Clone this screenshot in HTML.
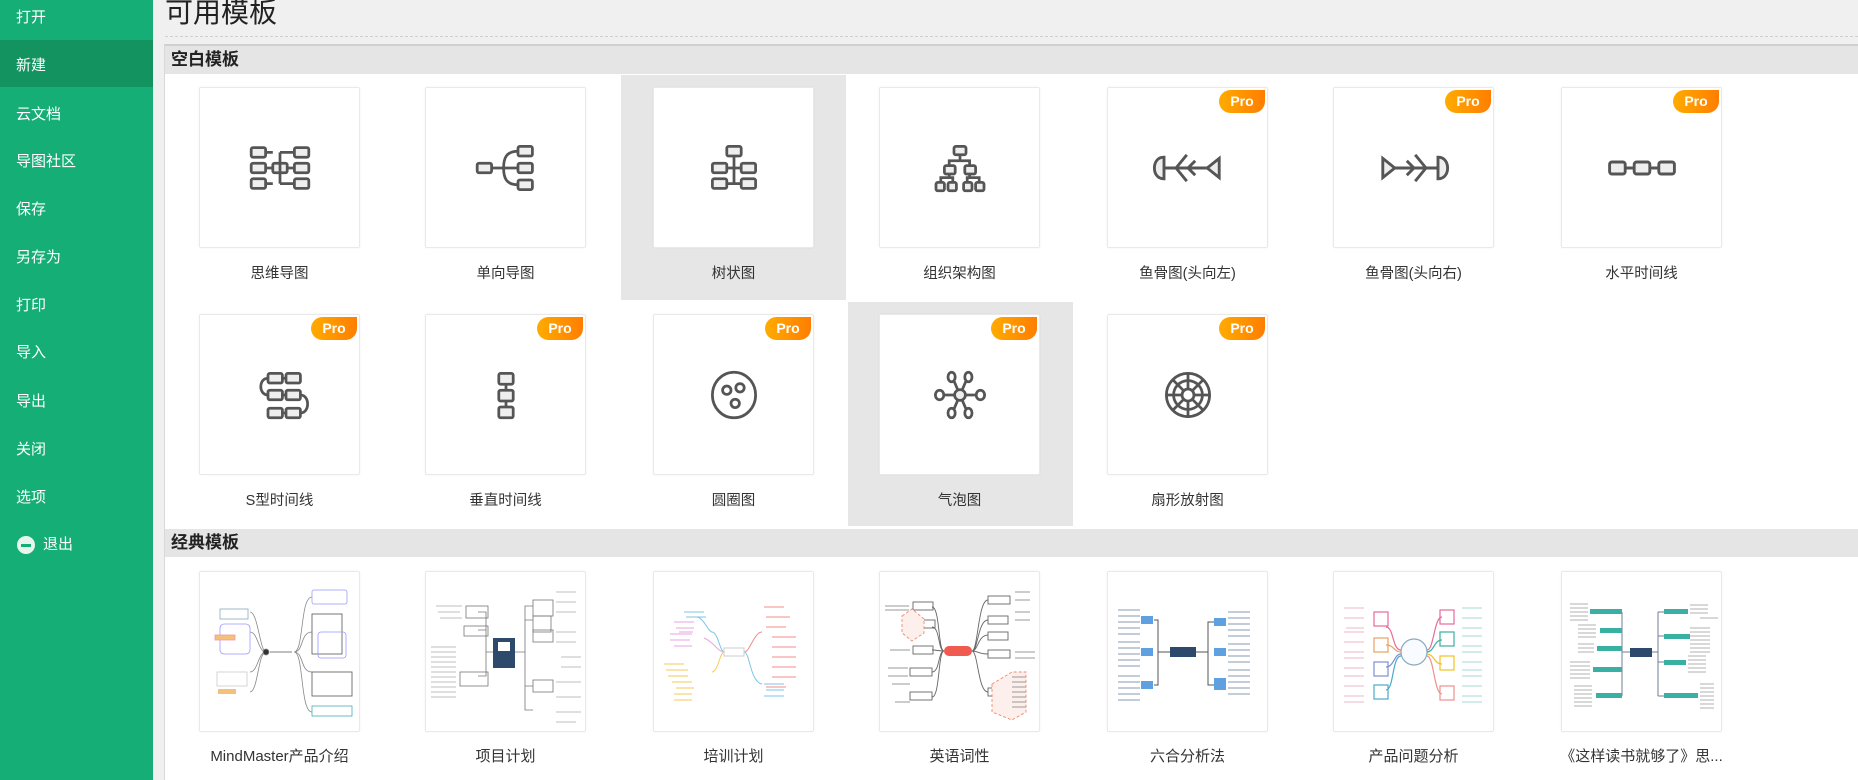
<!DOCTYPE html>
<html><head><meta charset="utf-8"><style>
*{margin:0;padding:0;box-sizing:border-box}
body{width:1858px;height:780px;overflow:hidden;background:#f0f0f0;font-family:"Liberation Sans","Noto Sans CJK SC",sans-serif;position:relative}
#side{position:absolute;left:0;top:0;width:153px;height:780px;background:#15ae76}
.si{position:absolute;left:16px;color:#fff;font-size:15px;line-height:20px}
#act{position:absolute;left:0;top:40px;width:153px;height:47px;background:#12935f}
#title{position:absolute;left:165px;top:-5px;font-size:28px;color:#222;line-height:36px}
#dash{position:absolute;left:165px;right:0;top:36px;border-top:1px dashed #cfcfcf}
#panel{position:absolute;left:164px;top:44px;right:0;bottom:0;background:#fff;border-left:1px solid #d8d8d8;border-top:2px solid #d0d0d0}
.hd{position:absolute;left:165px;right:0;height:28px;background:#e5e5e5;font-weight:bold;font-size:17px;color:#222;padding-left:6px;line-height:28px}
.hl{position:absolute;width:225px;background:#e6e6e6}
.card{position:absolute;width:161px;height:161px;background:#fff;border:1px solid #e9e9e9;border-radius:2px;box-shadow:0 0 2px rgba(0,0,0,.05)}
.card svg.ic{position:absolute;left:44px;top:44px}
.pro{position:absolute;right:2px;top:2px;width:46px;height:23px;background:linear-gradient(90deg,#ffab00,#ff7e00);border-radius:12px 0 12px 12px;color:#fff;font-weight:bold;font-size:14px;line-height:23px;text-align:center}
.lb{position:absolute;width:225px;text-align:center;font-size:14.5px;color:#333}
.th{position:absolute;left:0;top:0}
</style></head><body>
<div id="side">
<div id="act"></div>
<div class="si" style="top:8px">打开</div>
<div class="si" style="top:56px">新建</div>
<div class="si" style="top:105px">云文档</div>
<div class="si" style="top:152px">导图社区</div>
<div class="si" style="top:200px">保存</div>
<div class="si" style="top:248px">另存为</div>
<div class="si" style="top:296px">打印</div>
<div class="si" style="top:343px">导入</div>
<div class="si" style="top:392px">导出</div>
<div class="si" style="top:440px">关闭</div>
<div class="si" style="top:488px">选项</div>
<div style="position:absolute;left:17px;top:536px;width:18px;height:18px;border-radius:50%;background:#e8f5ef"><div style="position:absolute;left:4px;top:8px;width:10px;height:2.5px;background:#15ae76"></div></div>
<div class="si" style="top:535px;left:43px">退出</div>
</div>
<div id="title">可用模板</div>
<div id="dash"></div>
<div id="panel"></div>
<div class="hd" style="top:46px">空白模板</div>
<div class="hd" style="top:529px">经典模板</div>
<div class="hl" style="left:621px;top:75px;height:225px"></div>
<div class="hl" style="left:848px;top:302px;height:224px"></div>

<svg width="0" height="0" style="position:absolute">
<defs>
<g id="b"><rect width="12" height="8" rx="1.5" fill="#eee" stroke="#555" stroke-width="2.3"/></g>
</defs></svg>

<!-- Row 1 -->
<div class="card" style="left:199px;top:87px"><svg class="ic" width="72" height="72" viewBox="0 0 60 60" fill="none" stroke="#555" stroke-width="2.3">
<use href="#b" x="6" y="13"/><use href="#b" x="6" y="26"/><use href="#b" x="6" y="39"/>
<use href="#b" x="42" y="13"/><use href="#b" x="42" y="26"/><use href="#b" x="42" y="39"/>
<use href="#b" x="24" y="26"/><path d="M24 17H18M24 43H18M30 17v26M30 17h12M30 43h12M36 30h6M18 30h6"/></svg></div>
<div class="card" style="left:425px;top:87px"><svg class="ic" width="72" height="72" viewBox="0 0 60 60" fill="none" stroke="#555" stroke-width="2.3">
<use href="#b" x="6" y="26"/><use href="#b" x="40" y="12"/><use href="#b" x="40" y="26"/><use href="#b" x="40" y="40"/>
<path d="M18 30h22M40 16c-10 0-12 6-12 14s2 14 12 14"/></svg></div>
<div class="card" style="left:653px;top:87px"><svg class="ic" width="72" height="72" viewBox="0 0 60 60" fill="none" stroke="#555" stroke-width="2.3">
<use href="#b" x="24" y="12"/><use href="#b" x="12" y="26"/><use href="#b" x="36" y="26"/><use href="#b" x="12" y="39"/><use href="#b" x="36" y="39"/>
<path d="M30 20v24M24 30h12M24 43h12"/></svg></div>
<div class="card" style="left:879px;top:87px"><svg class="ic" width="72" height="72" viewBox="0 0 60 60" fill="none" stroke="#555" stroke-width="2.3">
<rect x="25" y="12" width="10" height="7" rx="1.5" fill="#eee"/><rect x="17" y="28" width="9" height="7" rx="1.5" fill="#eee"/><rect x="34" y="28" width="9" height="7" rx="1.5" fill="#eee"/>
<rect x="10" y="42" width="7" height="7" rx="1.5" fill="#eee"/><rect x="20" y="42" width="7" height="7" rx="1.5" fill="#eee"/><rect x="33" y="42" width="7" height="7" rx="1.5" fill="#eee"/><rect x="43" y="42" width="7" height="7" rx="1.5" fill="#eee"/>
<path d="M30 19v5M21 28v-4h17v4M21 35v3h-7v4M21 38h3v4M38 35v3h-2v4M38 38h8v4"/></svg></div>
<div class="card" style="left:1107px;top:87px"><div class="pro">Pro</div><svg class="ic" width="72" height="72" viewBox="0 0 60 60" fill="none" stroke="#555" stroke-width="2.4">
<path d="M10 21c-6 0-8 5-8 9s2 9 8 9z" fill="#eee"/><path d="M10 30h36M20 30l9-11M20 30l9 11M30 30l6-6M30 30l6 6"/><path d="M56 22l-10 8 10 8z" fill="#eee"/></svg></div>
<div class="card" style="left:1333px;top:87px"><div class="pro">Pro</div><svg class="ic" width="72" height="72" viewBox="0 0 60 60" fill="none" stroke="#555" stroke-width="2.4">
<path d="M50 21c6 0 8 5 8 9s-2 9-8 9z" fill="#eee"/><path d="M14 30h36M40 30l-9-11M40 30l-9 11M30 30l-6-6M30 30l-6 6"/><path d="M4 22l10 8-10 8z" fill="#eee"/></svg></div>
<div class="card" style="left:1561px;top:87px"><div class="pro">Pro</div><svg class="ic" width="72" height="72" viewBox="0 0 60 60" fill="none" stroke="#555" stroke-width="2.4">
<rect x="3" y="25" width="13" height="10" rx="2" fill="#eee"/><rect x="23.5" y="25" width="13" height="10" rx="2" fill="#eee"/><rect x="44" y="25" width="13" height="10" rx="2" fill="#eee"/><path d="M16 30h7.5M36.5 30h7.5"/></svg></div>
<div class="lb" style="left:167px;top:262px">思维导图</div>
<div class="lb" style="left:393px;top:262px">单向导图</div>
<div class="lb" style="left:621px;top:262px">树状图</div>
<div class="lb" style="left:847px;top:262px">组织架构图</div>
<div class="lb" style="left:1075px;top:262px">鱼骨图(头向左)</div>
<div class="lb" style="left:1301px;top:262px">鱼骨图(头向右)</div>
<div class="lb" style="left:1529px;top:262px">水平时间线</div>

<!-- Row 2 -->
<div class="card" style="left:199px;top:314px"><div class="pro">Pro</div><svg class="ic" width="72" height="72" viewBox="0 0 60 60" fill="none" stroke="#555" stroke-width="2.3">
<use href="#b" x="20" y="12"/><use href="#b" x="35" y="12"/><use href="#b" x="20" y="26"/><use href="#b" x="35" y="26"/><use href="#b" x="20" y="41"/><use href="#b" x="35" y="41"/>
<path d="M32 16h3M32 30h3M32 45h3M20 16c-8 0-8 14 0 14M47 30c8 0 8 15 0 15"/></svg></div>
<div class="card" style="left:425px;top:314px"><div class="pro">Pro</div><svg class="ic" width="72" height="72" viewBox="0 0 60 60" fill="none" stroke="#555" stroke-width="2.3">
<rect x="24" y="12" width="12" height="9" rx="1.5" fill="#eee"/><rect x="24" y="26" width="12" height="9" rx="1.5" fill="#eee"/><rect x="24" y="40" width="12" height="9" rx="1.5" fill="#eee"/><path d="M30 21v5M30 35v5"/></svg></div>
<div class="card" style="left:653px;top:314px"><div class="pro">Pro</div><svg class="ic" width="72" height="72" viewBox="0 0 60 60" fill="none" stroke="#555" stroke-width="2.3">
<ellipse cx="30" cy="30" rx="18" ry="19"/><circle cx="24" cy="26" r="3.5"/><circle cx="35" cy="24" r="3.5"/><circle cx="31" cy="37" r="3.5"/></svg></div>
<div class="card" style="left:879px;top:314px"><div class="pro">Pro</div><svg class="ic" width="72" height="72" viewBox="0 0 60 60" fill="none" stroke="#555" stroke-width="2.3">
<path d="M30 30L24 16M30 30L36 16M30 30L24 44M30 30L36 44M30 30H14M30 30H46"/>
<circle cx="30" cy="30" r="4.5" fill="#eee"/><ellipse cx="23" cy="15" rx="3" ry="4" fill="#fff"/><ellipse cx="37" cy="15" rx="3" ry="4" fill="#fff"/><ellipse cx="23" cy="45" rx="3" ry="4" fill="#fff"/><ellipse cx="37" cy="45" rx="3" ry="4" fill="#fff"/><ellipse cx="13" cy="30" rx="3.5" ry="4" fill="#fff"/><ellipse cx="47" cy="30" rx="3.5" ry="4" fill="#fff"/></svg></div>
<div class="card" style="left:1107px;top:314px"><div class="pro">Pro</div><svg class="ic" width="72" height="72" viewBox="0 0 60 60" fill="none" stroke="#555" stroke-width="2.3">
<circle cx="30" cy="30" r="18"/><circle cx="30" cy="30" r="12"/><circle cx="30" cy="30" r="5"/><path d="M30 12v13M30 35v13M12 30h13M35 30h13M17 17l9 9M34 34l9 9M43 17l-9 9M26 34l-9 9"/></svg></div>
<div class="lb" style="left:167px;top:489px">S型时间线</div>
<div class="lb" style="left:393px;top:489px">垂直时间线</div>
<div class="lb" style="left:621px;top:489px">圆圈图</div>
<div class="lb" style="left:847px;top:489px">气泡图</div>
<div class="lb" style="left:1075px;top:489px">扇形放射图</div>

<!-- Row 3 thumbnails -->
<div class="card" style="left:199px;top:571px"><svg class="th" width="160" height="160" fill="none" stroke="#888" stroke-width="0.8">
<path d="M66 80C60 80 58 40 50 40M66 80C58 80 58 60 50 60M66 80C58 80 58 100 50 100M66 80C58 80 58 120 50 120M94 80C104 80 100 25 112 25M94 80C104 80 100 60 112 60M94 80C104 80 100 100 112 100M94 80C104 80 100 140 112 140"/>
<rect x="20" y="37" width="28" height="10" stroke="#8ab"/><rect x="20" y="52" width="30" height="30" rx="4" stroke="#99f"/><rect x="15" y="63" width="20" height="5" fill="#f5c17a" stroke="#e9a"/><rect x="17" y="100" width="30" height="14" stroke="#ccc"/><rect x="18" y="117" width="18" height="5" fill="#f5c17a" stroke="none"/>
<rect x="112" y="18" width="35" height="14" rx="2" stroke="#99f"/><rect x="112" y="42" width="30" height="40" stroke="#555"/><rect x="118" y="60" width="28" height="26" rx="3" stroke="#99f"/><rect x="112" y="100" width="40" height="24" stroke="#555"/><rect x="112" y="134" width="40" height="10" stroke="#4ab"/>
<circle cx="66" cy="80" r="3" fill="#333"/><path d="M70 80h22" stroke="#555"/></svg></div>

<div class="card" style="left:425px;top:571px"><svg class="th" width="160" height="160" fill="none" stroke="#777" stroke-width="0.8">
<rect x="67" y="66" width="22" height="30" fill="#2d4a6c" stroke="none"/><rect x="72" y="70" width="12" height="9" fill="#fff" stroke="none"/>
<path d="M67 80H60V40h-8M60 40v0M60 80V58h-8M60 80v24h-8M89 80h10V34h8M99 80v-32h8M99 80v34h8M99 80v58h8"/>
<rect x="40" y="34" width="22" height="12"/><rect x="38" y="54" width="24" height="10"/><rect x="34" y="100" width="28" height="14"/>
<rect x="107" y="28" width="20" height="16"/><rect x="107" y="44" width="18" height="16"/><rect x="107" y="58" width="20" height="12"/><rect x="107" y="108" width="20" height="12"/>
<path d="M10 34h26M12 40h22M14 46h22M5 75h25M5 80h25M5 85h25M5 90h25M5 95h25M5 100h25M5 105h25M5 110h25M5 115h25M5 120h25M5 125h25M130 20h20M130 30h20M130 40h20M130 60h20M130 70h20M135 85h20M135 95h20M130 110h25M130 125h25M130 140h25M130 150h20" stroke="#aaa"/></svg></div>

<div class="card" style="left:653px;top:571px"><svg class="th" width="160" height="160" fill="none" stroke-width="1">
<path d="M70 80C66 80 64 60 58 60C54 60 50 45 42 45" stroke="#7cc6e8"/><path d="M70 80C64 80 60 70 50 66" stroke="#e8a6df"/><path d="M70 80C66 80 64 100 58 100" stroke="#f7c95a"/><path d="M90 80C96 80 100 60 108 60" stroke="#f38b8b"/><path d="M90 80C96 80 96 110 108 112" stroke="#7cc6e8"/>
<path d="M20 50h20M22 56h18M16 62h22M16 68h20M20 74h18M25 60h14" stroke="#e8a6df"/><path d="M10 92h20M12 98h22M14 104h20M18 110h20M22 116h18M20 122h18M20 128h18" stroke="#f7c95a"/><path d="M110 35h20M112 45h24M112 55h20M118 65h24M118 75h24M118 85h24M118 95h24M118 105h24M112 115h20" stroke="#f38b8b"/><path d="M110 112h20M112 118h18M110 124h20M30 40h20M32 45h20" stroke="#7cc6e8"/>
<rect x="70" y="76" width="20" height="8" stroke="#ccc"/></svg></div>

<div class="card" style="left:879px;top:571px"><svg class="th" width="160" height="160" fill="none" stroke="#666" stroke-width="0.9">
<rect x="64" y="74" width="28" height="10" rx="5" fill="#f05a50" stroke="none"/>
<path d="M64 79C58 79 60 35 52 35M64 79C58 79 60 55 52 55M64 79C58 79 58 78 52 78M64 79C58 79 60 100 52 100M64 79C58 79 60 125 52 125M92 79C98 79 98 28 108 28M92 79C98 79 98 48 108 48M92 79C98 79 98 63 108 63M92 79C98 79 98 82 108 82M92 79C98 79 98 120 108 120"/>
<rect x="33" y="30" width="20" height="8"/><rect x="33" y="48" width="22" height="8"/><rect x="33" y="74" width="20" height="8"/><rect x="30" y="96" width="22" height="8"/><rect x="30" y="120" width="22" height="8"/>
<rect x="108" y="24" width="22" height="8"/><rect x="108" y="44" width="20" height="8"/><rect x="108" y="60" width="20" height="8"/><rect x="108" y="78" width="22" height="8"/><rect x="108" y="116" width="22" height="8"/>
<path d="M22 44l10-7 12 10v14l-12 8-10-8z" stroke="#f08a70" stroke-dasharray="3 2" fill="#fdf0ec"/><path d="M112 112l20-12h14v40l-14 8-20-8z" stroke="#f08a70" stroke-dasharray="3 2" fill="#fdf0ec"/>
<path d="M5 34h24M5 38h24M10 78h20M8 96h20M8 104h20M12 112h18M15 130h15M135 20h15M135 28h15M135 40h15M135 48h15M135 80h20M135 86h20M132 105h14M132 110h14M132 115h14M132 120h14M132 125h14M132 130h14M132 135h14" stroke="#999"/></svg></div>

<div class="card" style="left:1107px;top:571px"><svg class="th" width="160" height="160" fill="none" stroke="#5b8ec8" stroke-width="1">
<rect x="62" y="75" width="26" height="10" fill="#2d4a6c" stroke="none"/>
<path d="M62 80h-12M50 80V48h-4M50 80v0M50 80v33h-4M88 80h12M100 80V50h6M100 80v0M100 80v33h6" stroke="#555"/>
<rect x="33" y="44" width="12" height="8" fill="#5fa0e0" stroke="none"/><rect x="33" y="76" width="12" height="8" fill="#5fa0e0" stroke="none"/><rect x="33" y="109" width="12" height="8" fill="#5fa0e0" stroke="none"/>
<rect x="106" y="46" width="12" height="8" fill="#5fa0e0" stroke="none"/><rect x="106" y="76" width="12" height="8" fill="#5fa0e0" stroke="none"/><rect x="106" y="106" width="12" height="12" fill="#5fa0e0" stroke="none"/>
<path d="M10 38h22M10 44h22M10 50h22M10 56h22M10 62h22M10 70h22M10 76h22M10 82h22M10 88h22M10 94h22M10 104h22M10 110h22M10 116h22M10 122h22M10 128h22M120 40h22M120 46h22M120 52h22M120 58h22M120 64h22M120 72h22M120 78h22M120 84h22M120 90h22M120 98h22M120 104h22M120 110h22M120 116h22M120 122h22" stroke="#8a9ab0"/></svg></div>

<div class="card" style="left:1333px;top:571px"><svg class="th" width="160" height="160" fill="none" stroke-width="1.2">
<circle cx="80" cy="80" r="13" stroke="#8ab" fill="#f8fbff"/>
<path d="M67 78C58 78 60 55 52 55" stroke="#e76a9b"/><path d="M67 80C60 80 60 73 52 73" stroke="#e9a060"/><path d="M67 82C60 82 60 95 52 95" stroke="#7b8fd0"/><path d="M67 84C58 84 60 118 52 118" stroke="#4aaac8"/>
<path d="M93 78C100 78 100 45 108 45" stroke="#e76a9b"/><path d="M93 80C100 80 100 68 108 68" stroke="#3ab0a0"/><path d="M93 82C100 82 100 92 108 92" stroke="#f5c023"/><path d="M93 84C100 84 100 122 108 122" stroke="#f0908a"/>
<rect x="40" y="40" width="14" height="14" stroke="#e76a9b"/><rect x="40" y="66" width="14" height="14" stroke="#e9a060"/><rect x="40" y="90" width="14" height="14" stroke="#7b8fd0"/><rect x="40" y="113" width="14" height="14" stroke="#4aaac8"/>
<rect x="106" y="38" width="14" height="14" stroke="#e76a9b"/><rect x="106" y="60" width="14" height="14" stroke="#3ab0a0"/><rect x="106" y="84" width="14" height="14" stroke="#f5c023"/><rect x="106" y="114" width="14" height="14" stroke="#f0908a"/>
<path d="M10 36h20M10 46h20M12 56h18M10 60h20M10 70h20M10 80h20M10 86h20M10 96h20M10 104h20M10 114h20M10 124h20M10 130h20" stroke="#e9a0b8" stroke-width="0.8"/><path d="M128 36h20M128 46h20M128 56h20M128 64h20M128 74h20M128 80h20M128 90h20M128 98h20M128 104h20M128 114h20M128 124h20M128 130h20" stroke="#8cc" stroke-width="0.8"/></svg></div>

<div class="card" style="left:1561px;top:571px"><svg class="th" width="160" height="160" fill="none" stroke="#6d7f95" stroke-width="1">
<rect x="68" y="76" width="22" height="9" fill="#2d4a6c" stroke="none"/>
<path d="M68 80h-8M60 40v84M60 40h-8M60 59h-8M60 76h-8M60 97h-8M60 124h-8M90 80h6M96 40v84M96 40h6M96 64h6M96 90h6M96 124h6"/>
<rect x="28" y="37" width="32" height="5" fill="#3ab0a5" stroke="none"/><rect x="38" y="56" width="22" height="5" fill="#3ab0a5" stroke="none"/><rect x="35" y="74" width="25" height="5" fill="#3ab0a5" stroke="none"/><rect x="31" y="95" width="29" height="5" fill="#3ab0a5" stroke="none"/><rect x="34" y="121" width="26" height="5" fill="#3ab0a5" stroke="none"/>
<rect x="102" y="37" width="24" height="5" fill="#3ab0a5" stroke="none"/><rect x="102" y="62" width="26" height="5" fill="#3ab0a5" stroke="none"/><rect x="102" y="88" width="22" height="5" fill="#3ab0a5" stroke="none"/><rect x="102" y="121" width="34" height="5" fill="#3ab0a5" stroke="none"/>
<path d="M8 32h18M8 36h18M8 40h18M8 44h18M8 48h18M16 53h18M16 57h18M16 61h18M16 65h18M16 72h16M16 76h16M16 80h16M8 90h20M8 94h20M8 98h20M8 102h20M8 106h20M12 114h18M12 118h18M12 122h18M12 126h18M12 130h18M12 134h18M128 33h18M128 37h18M128 41h18M138 46h18M128 56h20M128 60h20M128 64h20M128 68h20M128 72h20M128 76h20M128 80h20M126 84h18M126 88h18M126 92h18M126 96h18M126 100h18M138 112h14M138 116h14M138 120h14M138 124h14M138 128h14M138 132h14M138 136h14" stroke="#999" stroke-width="0.7"/></svg></div>

<div class="lb" style="left:167px;top:745px;font-size:15px">MindMaster产品介绍</div>
<div class="lb" style="left:393px;top:745px;font-size:15px">项目计划</div>
<div class="lb" style="left:621px;top:745px;font-size:15px">培训计划</div>
<div class="lb" style="left:847px;top:745px;font-size:15px">英语词性</div>
<div class="lb" style="left:1075px;top:745px;font-size:15px">六合分析法</div>
<div class="lb" style="left:1301px;top:745px;font-size:15px">产品问题分析</div>
<div class="lb" style="left:1529px;top:745px;font-size:15px">《这样读书就够了》思...</div>
</body></html>
